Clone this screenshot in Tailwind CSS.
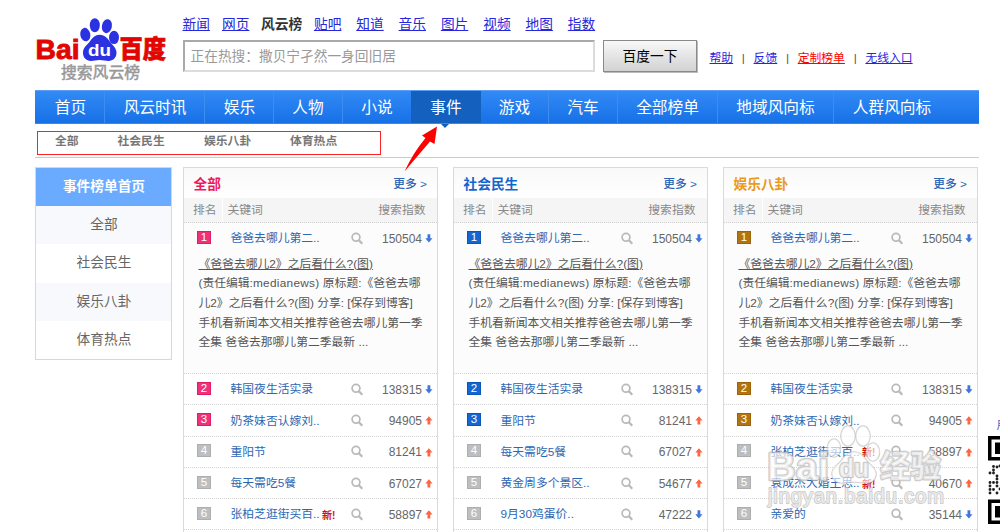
<!DOCTYPE html>
<html lang="zh-CN">
<head>
<meta charset="utf-8">
<title>百度搜索风云榜</title>
<script src="https://cdn.jsdelivr.net/npm/@tailwindcss/browser@4"></script>
</head>
<body class="relative h-[532px] w-[1000px] overflow-hidden bg-white font-['Liberation_Sans','Noto_Sans_CJK_SC',sans-serif] text-[11.8px] text-[#666]">

<header class="flex h-[90px] pl-[35px]">
  <div class="w-[147.500px] pt-[16px]">
    <svg width="134" height="66" viewBox="35 16 134 66" class="overflow-visible">
      <g fill="#2a32e1">
        <ellipse cx="94.800" cy="25.200" rx="5" ry="7"/>
        <ellipse cx="106.900" cy="26.200" rx="5" ry="7" transform="rotate(12 106.9 26.2)"/>
        <ellipse cx="85.300" cy="34.600" rx="5" ry="6.800" transform="rotate(-12 85.3 34.6)"/>
        <ellipse cx="114" cy="37.400" rx="5" ry="6.700"/>
        <path d="M99.500 34.800c5.500 0 8.500 4 10.500 7 2.500 3.500 6.500 6 6.500 11 0 5-3.500 8.200-8 8.200-3 0-5.500-.9-9-.9s-5.500.9-8.500.9c-5 0-8-3.500-8-8.200 0-5.500 4-7.500 7-11.500 2.500-3.500 5-6.500 9.500-6.500z"/>
      </g>
      <text x="35.500" y="59.300" font-size="28.500" font-weight="700" fill="#e10601" stroke="#e10601" stroke-width=".9" textLength="44" lengthAdjust="spacingAndGlyphs">Bai</text>
      <text x="88" y="55.800" font-size="17" font-weight="700" fill="#fff" textLength="23" lengthAdjust="spacingAndGlyphs">du</text>
      <text x="119.500" y="57.800" font-size="24.500" font-weight="900" fill="#e10601" stroke="#e10601" stroke-width=".7" textLength="46.500" lengthAdjust="spacingAndGlyphs">百度</text>
      <text x="61" y="77.500" font-size="15.600" fill="#999" stroke="#999" stroke-width=".5" textLength="79" lengthAdjust="spacingAndGlyphs">搜索风云榜</text>
    </svg>
  </div>
  <div>
    <nav class="flex h-[40px] pt-[15px] text-[13.7px] leading-[20px] text-[#2626dc]">
      <a class="w-[39.500px]"><u>新闻</u></a><a class="w-[39px]"><u>网页</u></a><b class="w-[53px] text-[#333]">风云榜</b><a class="w-[42.300px]"><u>贴吧</u></a><a class="w-[42.300px]"><u>知道</u></a><a class="w-[42.300px]"><u>音乐</u></a><a class="w-[42.300px]"><u>图片</u></a><a class="w-[42.300px]"><u>视频</u></a><a class="w-[42.300px]"><u>地图</u></a><a><u>指数</u></a>
    </nav>
    <div class="flex">
      <div class="h-[32px] w-[412.500px] border-2 border-[#dcdcdc] border-t-[#a9a9a9] border-l-[#a9a9a9] pl-[6px] text-[13.7px] leading-[30px] text-[#999]">正在热搜：撒贝宁孑然一身回旧居</div>
      <div class="ml-[8px] h-[32px] w-[94px] border border-[#8a8a8a] bg-linear-to-b from-[#f8f8f8] to-[#d2d2d2] text-center text-[13.7px] leading-[31px] text-black shadow-[1px_1px_0_#bbb]">百度一下</div>
      <div class="ml-[12.500px] flex pt-[8px] leading-[20px] text-[#2626dc]">
        <u>帮助</u><span class="w-[20.500px] text-center text-[#555]">|</span><u>反馈</u><span class="w-[20.500px] text-center text-[#555]">|</span><u class="text-[#f00]">定制榜单</u><span class="w-[20.500px] text-center text-[#555]">|</span><u>无线入口</u>
      </div>
    </div>
  </div>
</header>

<nav class="relative ml-[35px] flex h-[34px] w-[944px] border-y border-t-[#5c9ff5] border-b-[#3d86e6] bg-linear-to-b from-[#328af6] to-[#1671e6] text-center text-[15.7px] leading-[33px] text-white">
  <a class="w-[70px] border-r border-[#3f8df0] pl-[2px]">首页</a>
  <a class="w-[100px] border-r border-[#3f8df0] pl-[1px]">风云时讯</a>
  <a class="w-[69px] border-r border-[#3f8df0] pl-[1px]">娱乐</a>
  <a class="w-[69px] border-r border-[#3f8df0]">人物</a>
  <a class="w-[68px]">小说</a>
  <a class="relative w-[70px] bg-[#1360bf]">事件<i class="absolute top-[33px] left-[29.500px] size-0 border-x-4 border-t-4 border-x-transparent border-t-[#1360bf]"></i></a>
  <a class="w-[68px] border-r border-[#3f8df0]">游戏</a>
  <a class="w-[69px] border-r border-[#3f8df0]">汽车</a>
  <a class="w-[100px] border-r border-[#3f8df0]">全部榜单</a>
  <a class="w-[116px] border-r border-[#3f8df0]">地域风向标</a>
  <a class="w-[116px]">人群风向标</a>
</nav>

<div class="ml-[35px] h-[34px] w-[944px] border-b border-[#ccc] pt-[7px] pl-[2px]">
  <div class="flex h-[24px] w-[344px] border border-[#f22] pl-[17px] leading-[18px] font-bold text-[#777]">
    <span class="w-[62.500px]">全部</span><span class="w-[86.500px]">社会民生</span><span class="w-[86px]">娱乐八卦</span><span>体育热点</span>
  </div>
</div>

<main class="flex pt-[9px] pl-[35px]">
  <aside class="h-[193px] w-[137px] border border-[#d5d8dc] text-center text-[13.7px] leading-[38.200px] text-[#666]">
    <div class="h-[38.200px] bg-[#6aabff] pl-[1px] font-bold text-white">事件榜单首页</div>
    <div class="h-[38.200px] bg-[#f7f9fc] pl-[1px]">全部</div>
    <div class="h-[38.200px] pl-[1px]">社会民生</div>
    <div class="h-[38.200px] bg-[#f7f9fc] pl-[1px]">娱乐八卦</div>
    <div class="h-[38.200px] pl-[1px]">体育热点</div>
  </aside>
  <div id="cards" class="ml-[11px] flex gap-[15px]"></div>
</main>

<!-- red pointer to the active tab -->
<svg class="absolute top-[120px] left-[400px]" width="45" height="56" viewBox="400 120 45 56"><path d="M437 126.500 422 135.500 425.500 138Q413 153 404.500 171.500 418 155.500 430 141.500L434.500 144z" fill="#f00"/></svg>

<!-- watermark -->
<svg class="absolute top-[420px] left-[755px]" width="200" height="95" viewBox="755 420 200 95">
  <g fill="#fff" fill-opacity=".62" stroke="#bdbdbd" stroke-opacity=".75" stroke-width="1.600" stroke-linejoin="round" paint-order="stroke">
    <ellipse cx="848" cy="436" rx="7" ry="10"/><ellipse cx="863" cy="436" rx="7" ry="10"/>
    <ellipse cx="834" cy="448" rx="6.500" ry="9"/><ellipse cx="873" cy="452" rx="6.500" ry="9"/>
    <path d="M854 452c7 0 10 5 13 9 4 5 9 7 9 13 0 6-5 9-10 9-4 0-7-1-12-1s-8 1-12 1c-6 0-10-4-10-9 0-7 6-9 9-13 4-5 7-9 13-9z"/>
    <g stroke-width="2.600">
      <text x="767" y="480" font-size="38" font-weight="700" textLength="62" lengthAdjust="spacingAndGlyphs">Bai</text>
      <text x="839" y="477" font-size="25" font-weight="700" textLength="30" lengthAdjust="spacingAndGlyphs">du</text>
      <text x="880" y="477" font-size="31" font-weight="700" textLength="61" lengthAdjust="spacingAndGlyphs">经验</text>
    </g>
    <text x="768" y="503" font-size="20" textLength="176" lengthAdjust="spacing" stroke-width="1.800">jingyan.baidu.com</text>
  </g>
</svg>

<!-- clipped side widget -->
<div class="absolute top-[416px] left-[996.500px] w-[20px] leading-[18px] text-[#3a6cb5]">用</div>
<svg class="absolute top-[436px] left-[988px]" width="12" height="88" viewBox="0 0 12 88">
  <path d="M0 0h12v3.500H3.500v17.500H12v3.500H0zM7 6.500h5v11.500H7zM0 63.500h12v3.500H3.500v17.500H12v3.500H0zM7 70h5v11.500H7z"/>
  <path d="M5.500 30.500h0M5.500 34h0M2 37h0M5.500 37h0M9 31h0M9 40h0M9 43h0M2 46.500h0M5.500 46.500h0M9 46.500h0M2 50h0M9 50h0M2 53.500h0M5.500 53.500h0M2 57h0M9 57h0M12 30h0M12 53h0" stroke="#222" stroke-width="2.900" stroke-linecap="round"/>
</svg>

<script>
const lens = '<svg width="13" height="13" viewBox="0 0 13 13" fill="none" stroke="#b9b9b9"><circle cx="5" cy="5.300" r="3.900" stroke-width="1.700"/><path d="M7.900 8.300 11.300 11.700" stroke-width="2.300"/></svg>';
const down = '<svg width="8" height="9" viewBox="0 0 8 9"><path d="M2.500.2h2.800v4h2.200L3.900 8.500.3 4.200h2.200z" fill="#3f76e0"/></svg>';
const up = '<svg width="8" height="9" viewBox="0 0 8 9"><path d="M2.500 8.500h2.800V4.600h2.200L3.900.2.3 4.600h2.200z" fill="#ff6540"/></svg>';
const cards = [
  {t:'全部', tc:'text-[#f0185c]', bc:'bg-[#f0307a] border-[#e01e66]', rows:[['爸爸去哪儿第二..',150504,0],['韩国夜生活实录',138315,0],['奶茶妹否认嫁刘..',94905,1],['重阳节',81241,1],['每天需吃5餐',67027,1],['张柏芝逛街买百..',58897,1,1]]},
  {t:'社会民生', tc:'text-[#0f66d0]', bc:'bg-[#1467d2] border-[#0b56ba]', rows:[['爸爸去哪儿第二..',150504,0],['韩国夜生活实录',138315,0],['重阳节',81241,1],['每天需吃5餐',67027,1],['黄金周多个景区..',54677,1],['9月30鸡蛋价..',47222,0]]},
  {t:'娱乐八卦', tc:'text-[#ea9a1c]', bc:'bg-[#b3740f] border-[#9c630a]', rows:[['爸爸去哪儿第二..',150504,0],['韩国夜生活实录',138315,0],['奶茶妹否认嫁刘..',94905,1],['张柏芝逛街买百..',58897,1,1],['袁成杰大婚王思..',40670,1,1],['亲爱的',35144,0]]}
];
const detail = `<div class="h-[120px] pt-[1.500px] pl-[14.500px] leading-[19.600px] whitespace-nowrap text-[#555]">
  <div><u>《爸爸去哪儿2》之后看什么?(图)</u></div>
  <div>(责任编辑:<span class="tracking-[0.3px]">medianews)</span> 原标题:《爸爸去哪</div>
  <div>儿2》之后看什么?(图) 分享: [保存到博客]</div>
  <div>手机看新闻本文相关推荐爸爸去哪儿第一季</div>
  <div>全集 爸爸去那哪儿第二季最新 ...</div>
</div>`;
const row = (c, r, i) => `<div class="border-b border-dotted border-[#d4d4d4] ${i ? 'h-[31.300px]' : 'h-[151px] bg-[#fcfcfc]'}">
  <div class="flex h-[30.300px] items-center">
    <span class="-mt-[2px] ml-[13px] h-[13px] w-[14px] border text-center text-[11.5px] leading-[11px] text-white ${i < 3 ? c.bc : 'bg-[#bdbec0] border-[#adaeb0]'}">${i + 1}</span>
    <span class="ml-[19.500px] w-[91.500px] pt-[2px] whitespace-nowrap text-[#2d66b3]">${r[0]}</span>
    <span class="w-[29px] pt-[2px] text-[10px] font-bold whitespace-nowrap text-[#d0140c]">${r[3] ? '新!' : ''}</span>
    ${lens}
    <span class="w-[58px] pt-[1px] text-right text-[12px]">${r[1]}</span>
    <span class="ml-[2.500px] pt-[1px]">${r[2] ? up : down}</span>
  </div>${i ? '' : detail}
</div>`;
document.getElementById('cards').innerHTML = cards.map(c => `<section class="h-[380px] w-[255px] border border-[#dadada]">
  <div class="flex h-[30px] items-center justify-between bg-linear-to-b from-[#f9f9f9] to-white pt-[4px] pr-[10px] pl-[9.500px]"><b class="text-[13.7px] ${c.tc}">${c.t}</b><span class="text-[#2d66b3]"><b class="font-medium">更多</b> &gt;</span></div>
  <div class="flex h-[25px] border-b border-dotted border-[#d0d0d0] bg-[#f5f5f5] leading-[24px] text-[#888]"><span class="w-[39px] border-r border-white pl-[9px]">排名</span><span class="grow pl-[4.500px]">关键词</span><span class="pr-[11.500px]">搜索指数</span></div>
  ${c.rows.map((r, i) => row(c, r, i)).join('')}
</section>`).join('');
</script>
</body>
</html>
